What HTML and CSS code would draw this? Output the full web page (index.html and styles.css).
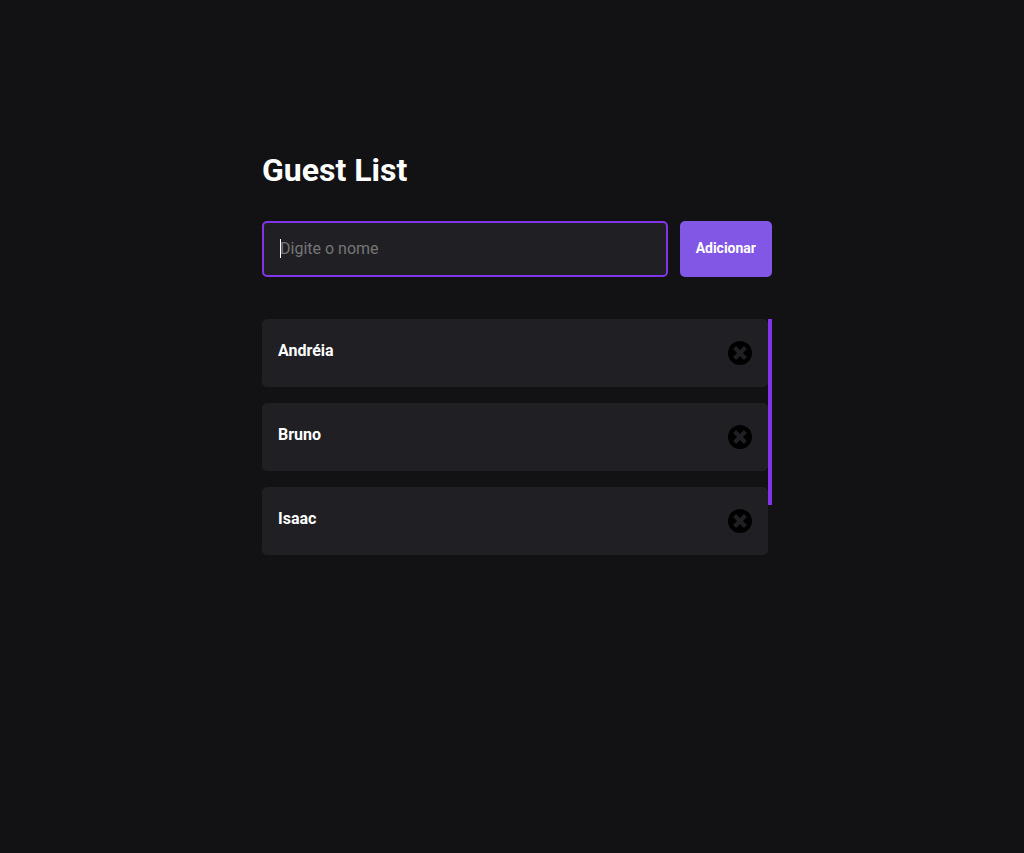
FILE: index.html
```html
<!DOCTYPE html>
<html lang="pt-BR">
<head>
<meta charset="utf-8">
<meta name="viewport" content="width=device-width, initial-scale=1">
<title>Guest List</title>
<link rel="stylesheet" href="styles.css">
</head>
<body>
<svg class="sprite" aria-hidden="true">
  <symbol id="remove" viewBox="0 0 24 24">
    <circle cx="12" cy="12" r="12" fill="#000"/>
    <path d="M6.6 6.6l10.8 10.8M17.4 6.6L6.6 17.4" stroke="#202024" stroke-width="4.2"/>
  </symbol>
</svg>
<main class="container">
  <h1 class="title">Guest List</h1>
  <form class="form">
    <div class="field">
      <input class="input" type="text" placeholder="Digite o nome" aria-label="Digite o nome">
      <span class="caret"></span>
    </div>
    <button class="add" type="button">Adicionar</button>
  </form>
  <div class="scroller">
    <ul class="list">
      <li class="guest"><strong class="name">Andréia</strong><button class="remove" type="button" aria-label="Remover Andréia"><svg class="icon"><use href="#remove"/></svg></button></li>
      <li class="guest"><strong class="name">Bruno</strong><button class="remove" type="button" aria-label="Remover Bruno"><svg class="icon"><use href="#remove"/></svg></button></li>
      <li class="guest"><strong class="name">Isaac</strong><button class="remove" type="button" aria-label="Remover Isaac"><svg class="icon"><use href="#remove"/></svg></button></li>
    </ul>
    <div class="thumb"></div>
  </div>
</main>
</body>
</html>
```
FILE: styles.css
```css
* {
  box-sizing: border-box;
  margin: 0;
  padding: 0;
}

body {
  min-height: 100vh;
  padding: 150px 0 0 10px;
  background: #121214;
  color: #fff;
  font-family: Roboto, sans-serif;
  font-size: 16px;
}

.sprite {
  position: absolute;
  width: 0;
  height: 0;
}

.container {
  width: 100%;
  max-width: 510px;
  margin: 0 auto;
}

.title {
  font-size: 32px;
  line-height: 40px;
  font-weight: 700;
}

.form {
  display: flex;
  gap: 12px;
  margin-top: 31px;
}

.field {
  position: relative;
  flex: 1;
}

.input {
  display: block;
  width: 100%;
  height: 56px;
  padding: 0 16px 2px;
  border: 2px solid #8234e9;
  border-radius: 5px;
  outline: 0;
  background: #202024;
  color: #fff;
  font: inherit;
}

.input::placeholder {
  color: #757575;
}

.caret {
  position: absolute;
  top: 18px;
  left: 18px;
  width: 1px;
  height: 19px;
  background: #fff;
}

.add {
  padding: 0 16px 2px;
  border: 0;
  border-radius: 5px;
  background: #8257e5;
  color: #fff;
  font: 700 14px Roboto, sans-serif;
}

.scroller {
  display: flex;
  margin-top: 42px;
}

.list {
  display: flex;
  flex: 1;
  flex-direction: column;
  gap: 16px;
  list-style: none;
}

.guest {
  display: flex;
  justify-content: space-between;
  align-items: flex-start;
  padding: 22px 16px;
  border-radius: 5px;
  background: #202024;
}

.name {
  font-weight: 700;
  line-height: 19px;
}

.remove {
  border: 0;
  background: none;
}

.icon {
  display: block;
  width: 24px;
  height: 24px;
}

.thumb {
  width: 4px;
  height: 186px;
  background: #8234e9;
}
```
